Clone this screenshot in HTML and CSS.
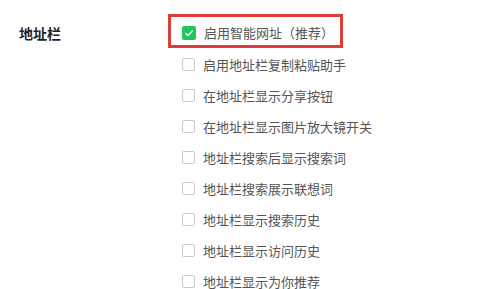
FILE: index.html
```html
<!DOCTYPE html>
<html lang="zh-CN">
  <head>
    <meta charset="UTF-8" />
    <meta name="viewport" content="width=device-width, initial-scale=1.0" />
    <title>地址栏设置</title>
    <link rel="stylesheet" href="styles.css">
  </head>
  <body>
    <div class="section">
      <div class="section-title">地址栏</div>
      <div class="options">
        <label class="option option-active">
          <span class="check checked">
            <svg viewBox="0 0 14 14" width="14" height="14">
              <path d="M3.5 7.2 L6 9.6 L10.6 4.6" fill="none" stroke="#fff" stroke-width="1.4" />
            </svg>
          </span>
          启用智能网址（推荐）
        </label>
        <label class="option option-next"><span class="check"></span>启用地址栏复制粘贴助手</label>
        <label class="option"><span class="check"></span>在地址栏显示分享按钮</label>
        <label class="option"><span class="check"></span>在地址栏显示图片放大镜开关</label>
        <label class="option"><span class="check"></span>地址栏搜索后显示搜索词</label>
        <label class="option"><span class="check"></span>地址栏搜索展示联想词</label>
        <label class="option"><span class="check"></span>地址栏显示搜索历史</label>
        <label class="option"><span class="check"></span>地址栏显示访问历史</label>
        <label class="option"><span class="check"></span>地址栏显示为你推荐</label>
      </div>
    </div>
  </body>
</html>
```

FILE: styles.css
```css
body {
  margin: 0;
  background-color: #fff;
  font-family: "Noto Sans CJK SC", "Noto Sans", sans-serif;
}

.section {
  display: flex;
  padding-left: 19px;
}

.section-title {
  width: 149px;
  padding-top: 24px;
  font-size: 14px;
  line-height: 18px;
  font-weight: bold;
  color: #1f1f1f;
}

.options {
  display: flex;
  flex-direction: column;
  padding-top: 14px;
}

.option {
  display: flex;
  align-items: center;
  height: 31px;
  padding-left: 14px;
  font-size: 13px;
  color: #555;
  white-space: nowrap;
}

.option-active {
  box-sizing: border-box;
  width: 175px;
  height: 34px;
  padding-left: 11px;
  padding-top: 3px;
  border: 3px solid #e23b3b;
}

.option-next {
  margin-top: 1px;
}

.check {
  box-sizing: border-box;
  width: 13px;
  height: 13px;
  margin-right: 8px;
  border: 1px solid #c9c9c9;
  border-radius: 2px;
  background-color: #fff;
  flex-shrink: 0;
}

.check.checked {
  width: 14px;
  height: 14px;
  border: none;
  background-color: #22c55e;
}

.check svg {
  display: block;
}
```
